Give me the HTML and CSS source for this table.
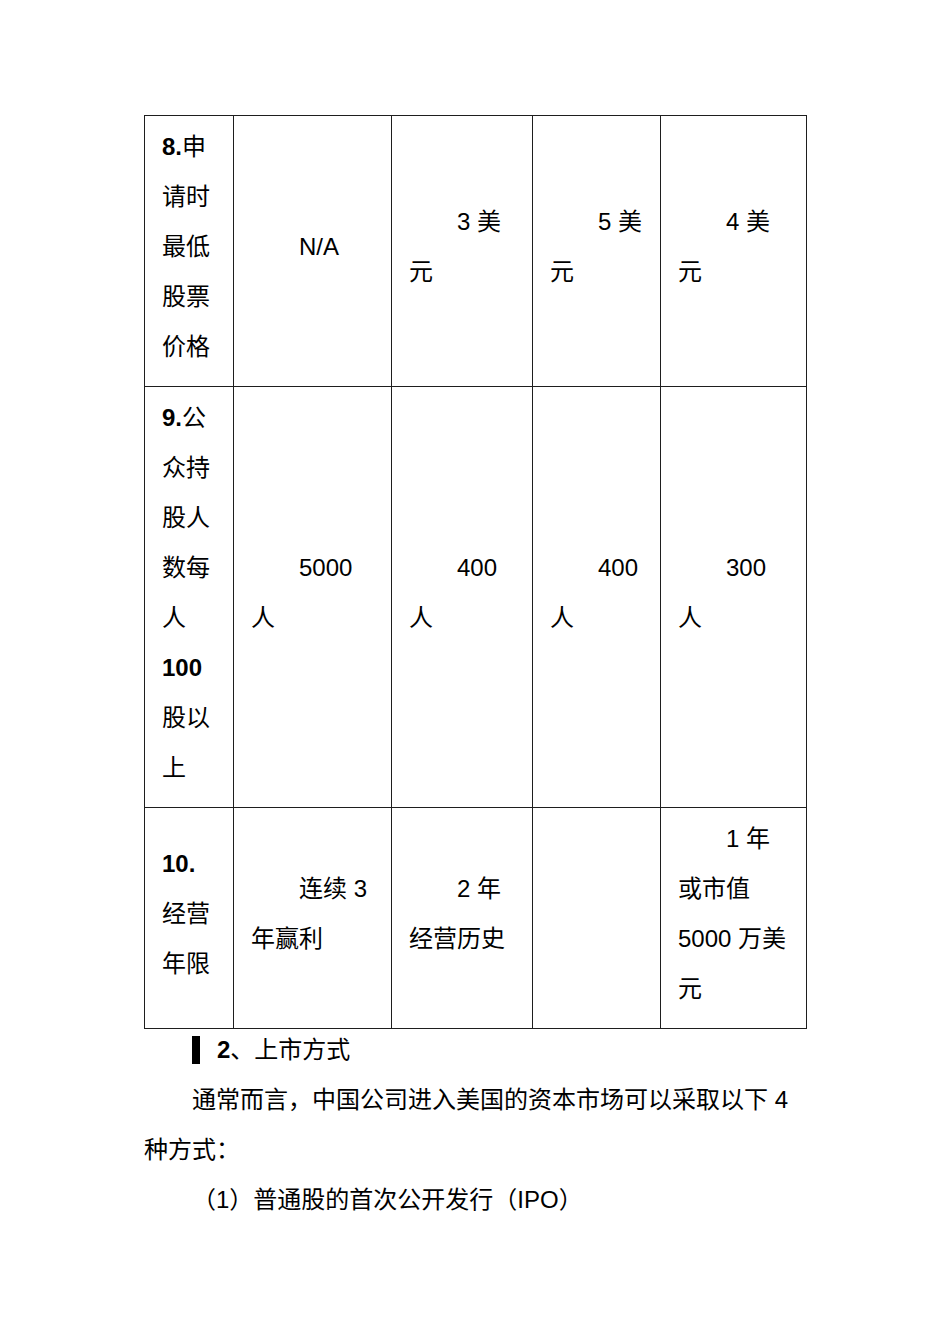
FILE: index.html
```html
<!DOCTYPE html>
<html lang="zh-CN">
<head>
<meta charset="utf-8">
<title>上市方式</title>
<link rel="stylesheet" href="styles.css">
</head>
<body>
<div class="page">
  <table class="req">
    <colgroup>
      <col class="c1"><col class="c2"><col class="c3"><col class="c4"><col class="c5">
    </colgroup>
    <tr class="r1">
      <td class="label"><b>8.</b>申<br>请时<br>最低<br>股票<br>价格</td>
      <td class="val">N/A</td>
      <td class="val">3 美<br>元</td>
      <td class="val">5 美<br>元</td>
      <td class="val">4 美<br>元</td>
    </tr>
    <tr class="r2">
      <td class="label"><b>9.</b>公<br>众持<br>股人<br>数每<br>人<br><b>100</b><br>股以<br>上</td>
      <td class="val">5000<br>人</td>
      <td class="val">400<br>人</td>
      <td class="val">400<br>人</td>
      <td class="val">300<br>人</td>
    </tr>
    <tr class="r3">
      <td class="label"><b>10.</b><br>经营<br>年限</td>
      <td class="val">连续 3<br>年赢利</td>
      <td class="val">2 年<br>经营历史</td>
      <td class="val"></td>
      <td class="val">1 年<br>或市值<br>5000 万美<br>元</td>
    </tr>
  </table>
  <h2 class="heading"><span class="bar"></span><b>2</b>、上市方式</h2>
  <p class="para">通常而言，中国公司进入美国的资本市场可以采取以下 4<br>种方式：</p>
  <p class="para">（1）普通股的首次公开发行（IPO）</p>
</div>
</body>
</html>
```

FILE: styles.css
```css
html, body {
  margin: 0;
  padding: 0;
  background: #ffffff;
}

body {
  font-family: "Liberation Sans", "Noto Sans CJK SC", sans-serif;
  font-size: 24px;
  color: #000000;
}

.page {
  padding: 115px 0 0 144px;
  width: 662px;
}

.req {
  border-collapse: collapse;
  table-layout: fixed;
  width: 662px;
}

.c1 { width: 89px; }
.c2 { width: 158px; }
.c3 { width: 141px; }
.c4 { width: 128px; }
.c5 { width: 146px; }

.req td {
  border: 1px solid #1e1e1e;
  padding: 6px 10px 14px 17px;
  line-height: 50px;
  vertical-align: middle;
  white-space: nowrap;
}

.req td.val {
  padding-left: 17px;
  text-indent: 48px;
}

.req td b {
  font-weight: bold;
}

.heading {
  margin: 0 0 4px 0;
  padding-left: 48px;
  font-size: 24px;
  font-weight: normal;
  line-height: 42px;
  display: flex;
  align-items: center;
}

.bar {
  display: inline-block;
  width: 8px;
  height: 28px;
  background: #000000;
  margin-right: 17px;
}

.para {
  margin: 0;
  text-indent: 48px;
  line-height: 50px;
}
```
